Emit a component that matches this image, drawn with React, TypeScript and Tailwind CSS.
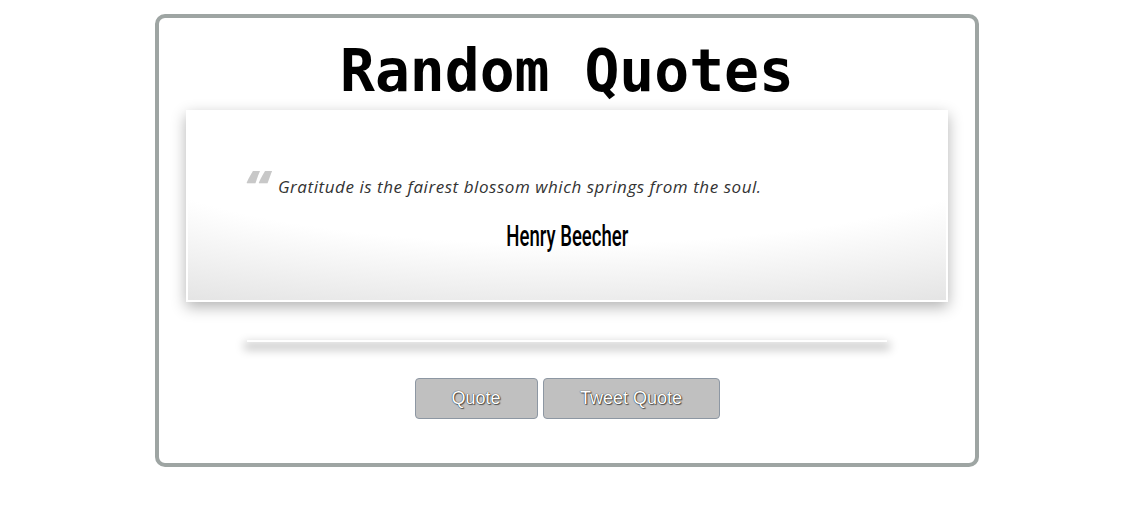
import React from "react";

export default function App() {
  return (
    <div className="w-full min-h-[526px] bg-white pt-[14px]">
      <div className="mx-auto w-[824px] h-[453px] border-4 border-[#9ea5a3] rounded-[10px] bg-white flex flex-col items-center">
        <h1 className="mt-[24px] h-[58px] leading-[58px] text-[58px] font-bold text-black font-['DejaVu_Sans_Mono',monospace]">
          Random Quotes
        </h1>
        <div className="mt-[10px] w-[762px] h-[192px] border-2 border-white shadow-[0_5px_14px_rgba(0,0,0,0.3)] bg-[radial-gradient(110%_100%_at_50%_15%,#ffffff_55%,#e2e2e2_100%)] flex flex-col">
          <div className="mt-[56px] ml-[56px] flex items-start">
            <span className="w-[34px] text-[50px] leading-[40px] font-extrabold italic text-[#c8c8c8] font-['Open_Sans',sans-serif]">
              “
            </span>
            <p className="mt-[9px] text-[17px] leading-[20px] italic text-[#333] tracking-[0.55px] font-['Open_Sans',sans-serif]">
              Gratitude is the fairest blossom which springs from the soul.
            </p>
          </div>
          <div className="mt-[12px] flex justify-center">
            <span className="inline-block origin-center scale-x-[0.64] text-[29px] leading-[32px] font-medium text-black font-['Roboto',sans-serif] whitespace-nowrap">
              Henry Beecher
            </span>
          </div>
        </div>
        <div className="mt-[38px] w-[640px] h-[2px] bg-white shadow-[0_5px_10px_3px_rgba(0,0,0,0.22)]" />
        <div className="mt-[36px] flex gap-[5px]">
          <button className="h-[41px] w-[123px] rounded-[4px] border border-[#8d97a3] bg-[#c0c0c0] text-white text-[18px] font-['Liberation_Sans',Arial,sans-serif] [text-shadow:0_0_1px_#000,1px_1px_1px_#555]">
            Quote
          </button>
          <button className="h-[41px] w-[177px] rounded-[4px] border border-[#8d97a3] bg-[#c0c0c0] text-white text-[18px] font-['Liberation_Sans',Arial,sans-serif] [text-shadow:0_0_1px_#000,1px_1px_1px_#555]">
            Tweet Quote
          </button>
        </div>
      </div>
    </div>
  );
}
